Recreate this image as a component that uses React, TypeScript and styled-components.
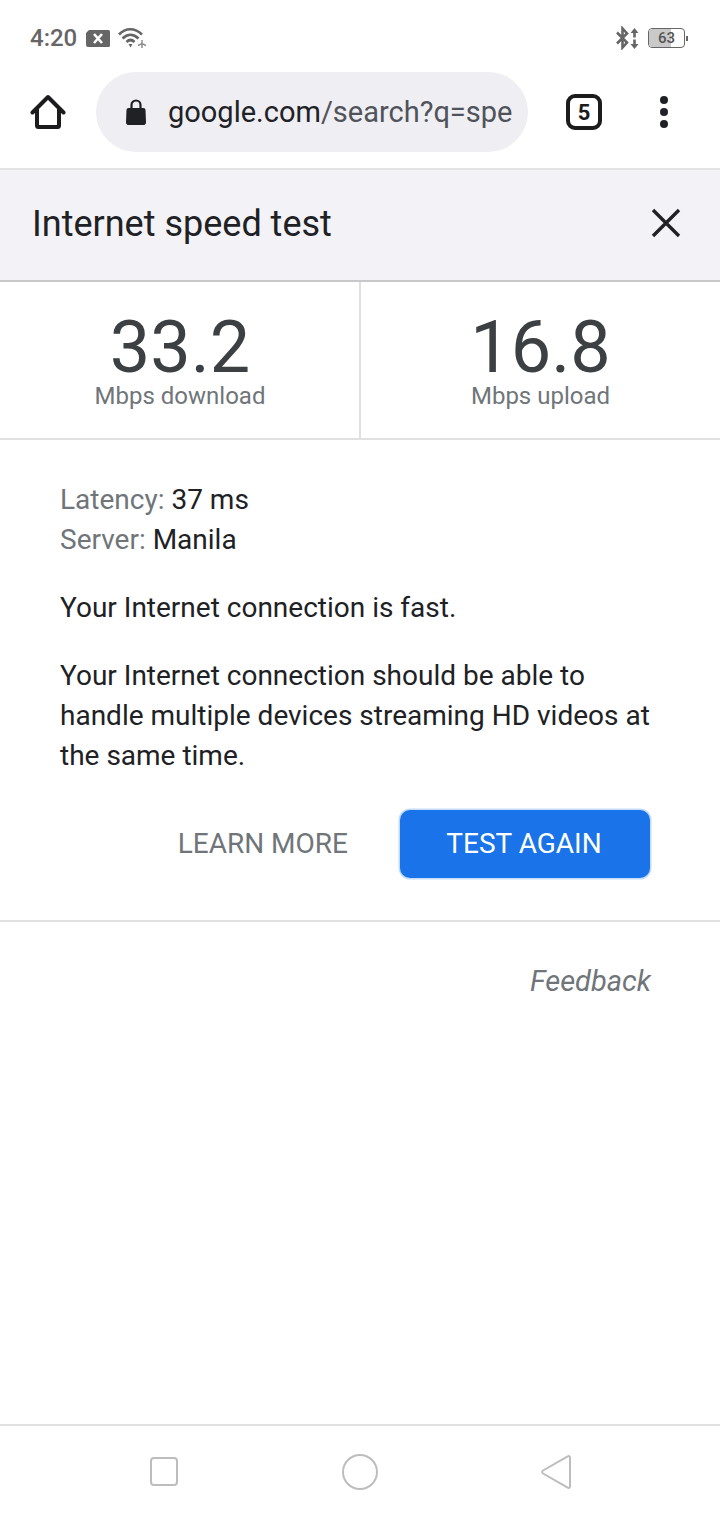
import { createGlobalStyle } from "styled-components";
import styled from "styled-components";

const GlobalStyle = createGlobalStyle`
  html, body {
    margin: 0;
    padding: 0;
    background: #fff;
  }
  * {
    box-sizing: border-box;
  }
  body {
    font-family: Roboto, "Liberation Sans", sans-serif;
    color: #202124;
  }
`;

export default function App() {
  return (
    <Page>
      <GlobalStyle />
      <StatusBar>
        <StatusGroup>
          <Clock>4:20</Clock>
          <NoticeIcon width="24" height="17" viewBox="0 0 24 17">
            <path d="M3 0h19.500a1.500 1.500 0 0 1 1.500 1.500v14a1.500 1.500 0 0 1-1.500 1.500H2a2 2 0 0 1-2-2V3z" fill="#666" />
            <path d="M8 4l8 9M16 4l-8 9" stroke="#fff" strokeWidth="2.600" />
          </NoticeIcon>
          <WifiIcon width="29" height="22" viewBox="0 0 29 22">
            <g fill="none" stroke="#666" strokeWidth="2.600">
              <path d="M1 7.500C7.500 0.500 17 0.500 24 7.500" />
              <path d="M4.500 11.500C9.500 6.500 15.500 6.500 20.500 11.500" />
              <path d="M8.500 15C11 12.500 14 12.500 16.500 15" />
            </g>
            <path d="M10.500 17h4l-2 3.500z" fill="#666" />
            <path d="M24 13v8M20 18.500l4-2 4 2" stroke="#8d8d8d" strokeWidth="1.500" fill="none" />
          </WifiIcon>
        </StatusGroup>
        <StatusGroup>
          <svg width="24" height="24" viewBox="0 0 24 24">
            <path d="M1 6.500l10 10-4.500 5V2.500l4.500 5-10 10" fill="none" stroke="#666" strokeWidth="2.600" />
            <path d="M18.500 2l4 5h-2.700v4.500h-2.600V7h-2.700zM18.500 23l4-5h-2.700v-4.500h-2.600V18h-2.700z" fill="#666" />
          </svg>
          <Battery>
            <BatteryLevel $percent={63} />
            <BatteryText>63</BatteryText>
          </Battery>
          <BatteryTip />
        </StatusGroup>
      </StatusBar>

      <Toolbar>
        <HomeButton>
          <svg width="36" height="36" viewBox="0 0 36 36">
            <path
              d="M2.500 18.500L18 3l15.500 15.500M7 15v16.500a1.500 1.500 0 0 0 1.500 1.500h19a1.500 1.500 0 0 0 1.500-1.500V15"
              fill="none"
              stroke="#1c1c1e"
              strokeWidth="4"
              strokeLinecap="round"
              strokeLinejoin="round"
            />
          </svg>
        </HomeButton>
        <Omnibox>
          <svg width="22" height="26" viewBox="0 0 22 26">
            <path d="M6.500 10V6a4.500 4.500 0 0 1 9 0v4" fill="none" stroke="#202124" strokeWidth="2.200" />
            <path d="M3.500 9h15a2 2 0 0 1 2 1.800l.5 12a3 3 0 0 1-3 3.200H4a3 3 0 0 1-3-3.200l.5-12a2 2 0 0 1 2-1.800z" fill="#202124" />
          </svg>
          <UrlText>
            google.com<UrlPath>/search?q=spe</UrlPath>
          </UrlText>
        </Omnibox>
        <TabCount>5</TabCount>
        <MenuDots>
          <Dot />
          <Dot />
          <Dot />
        </MenuDots>
      </Toolbar>

      <PanelHeader>
        <PanelTitle>Internet speed test</PanelTitle>
        <svg width="30" height="30" viewBox="0 0 30 30">
          <path d="M2 2l26 26M28 2L2 28" stroke="#202124" strokeWidth="3.400" />
        </svg>
      </PanelHeader>

      <Speeds>
        <SpeedCell>
          <SpeedValue>33.2</SpeedValue>
          <SpeedLabel>Mbps download</SpeedLabel>
        </SpeedCell>
        <SpeedCell $divided>
          <SpeedValue>16.8</SpeedValue>
          <SpeedLabel>Mbps upload</SpeedLabel>
        </SpeedCell>
      </Speeds>

      <Details>
        <InfoLine>
          <Muted>Latency:</Muted> 37 ms
        </InfoLine>
        <InfoLine>
          <Muted>Server:</Muted> Manila
        </InfoLine>
        <Paragraph>Your Internet connection is fast.</Paragraph>
        <Paragraph>
          Your Internet connection should be able to handle multiple devices streaming HD videos at the same time.
        </Paragraph>
        <Actions>
          <LearnMore>LEARN MORE</LearnMore>
          <TestAgain>TEST AGAIN</TestAgain>
        </Actions>
      </Details>

      <FeedbackRow>
        <Feedback>Feedback</Feedback>
      </FeedbackRow>

      <NavBar>
        <svg width="30" height="30" viewBox="0 0 30 30">
          <rect x="2" y="1" width="26" height="27" rx="3" fill="none" stroke="#bdbdbd" strokeWidth="2" />
        </svg>
        <svg width="38" height="38" viewBox="0 0 38 38">
          <circle cx="19" cy="19" r="17" fill="none" stroke="#bdbdbd" strokeWidth="2" />
        </svg>
        <svg width="32" height="36" viewBox="0 0 32 36">
          <path
            d="M29 3.500v29a1.500 1.500 0 0 1-2.300 1.200L2 19.500a1.800 1.800 0 0 1 0-3L26.700 2.300A1.500 1.500 0 0 1 29 3.500z"
            fill="none"
            stroke="#bdbdbd"
            strokeWidth="2"
          />
        </svg>
      </NavBar>
    </Page>
  );
}

const Page = styled.div`
  width: 720px;
  height: 1520px;
  background: #fff;
  display: flex;
  flex-direction: column;
  overflow: hidden;
`;

const StatusBar = styled.div`
  height: 73px;
  padding: 3px 32px 0 30px;
  display: flex;
  align-items: center;
  justify-content: space-between;
  flex-shrink: 0;
`;

const StatusGroup = styled.div`
  display: flex;
  align-items: center;
`;

const Clock = styled.span`
  font-size: 24px;
  font-weight: 500;
  color: #666;
`;

const NoticeIcon = styled.svg`
  margin-left: 9px;
`;

const WifiIcon = styled.svg`
  margin-left: 8px;
`;

const Battery = styled.div`
  position: relative;
  width: 37px;
  height: 20px;
  margin-left: 8px;
  border: 1.500px solid #666;
  border-radius: 4px;
  overflow: hidden;
`;

const BatteryLevel = styled.div<{ $percent: number }>`
  width: ${(props) => props.$percent}%;
  height: 100%;
  background: #c9c9c9;
`;

const BatteryText = styled.span`
  position: absolute;
  inset: 0;
  display: flex;
  align-items: center;
  justify-content: center;
  font-size: 15px;
  font-weight: 500;
  color: #555;
`;

const BatteryTip = styled.div`
  width: 2px;
  height: 5px;
  margin-left: 1px;
  background: #666;
`;

const Toolbar = styled.div`
  height: 97px;
  display: flex;
  align-items: center;
  flex-shrink: 0;
  border-bottom: 2px solid #e3e3e5;
  padding-bottom: 17px;
`;

const HomeButton = styled.div`
  width: 96px;
  display: flex;
  justify-content: center;
`;

const Omnibox = styled.div`
  width: 432px;
  height: 80px;
  border-radius: 40px;
  background: #eeeef3;
  display: flex;
  align-items: center;
  padding-left: 29px;
  gap: 21px;
`;

const UrlText = styled.span`
  font-size: 29px;
  color: #202124;
`;

const UrlPath = styled.span`
  color: #50535a;
`;

const TabCount = styled.div`
  width: 36px;
  height: 36px;
  margin-left: 38px;
  border: 4px solid #1c1c1e;
  border-radius: 9px;
  display: flex;
  align-items: center;
  justify-content: center;
  font-size: 22px;
  font-weight: 700;
  color: #1c1c1e;
`;

const MenuDots = styled.div`
  margin-left: 58px;
  display: flex;
  flex-direction: column;
  gap: 4px;
`;

const Dot = styled.span`
  width: 8px;
  height: 8px;
  border-radius: 50%;
  background: #202124;
`;

const PanelHeader = styled.div`
  height: 112px;
  background: #f3f3f7;
  border-bottom: 2px solid #c8c8ca;
  display: flex;
  align-items: center;
  justify-content: space-between;
  padding: 0 39px 4px 32px;
  flex-shrink: 0;
`;

const PanelTitle = styled.h1`
  margin: 0;
  padding-top: 2px;
  font-size: 36px;
  font-weight: 400;
  color: #202124;
`;

const Speeds = styled.div`
  display: grid;
  grid-template-columns: 1fr 1fr;
  height: 158px;
  border-bottom: 2px solid #e0e0e0;
  flex-shrink: 0;
`;

const SpeedCell = styled.div<{ $divided?: boolean }>`
  display: flex;
  flex-direction: column;
  align-items: center;
  padding-top: 30px;
  ${(props) => (props.$divided ? "border-left: 2px solid #e0e0e0; margin-left: -1px;" : "")}
`;

const SpeedValue = styled.div`
  font-size: 72px;
  line-height: 72px;
  color: #3c4043;
`;

const SpeedLabel = styled.div`
  font-size: 24px;
  line-height: 24px;
  color: #70757a;
`;

const Details = styled.div`
  padding: 40px 70px 42px 60px;
  border-bottom: 2px solid #e0e0e0;
  flex-shrink: 0;
`;

const InfoLine = styled.div`
  font-size: 28px;
  line-height: 40px;
  color: #202124;
`;

const Muted = styled.span`
  color: #70757a;
`;

const Paragraph = styled.p`
  margin: 28px 0 0;
  font-size: 28px;
  line-height: 40px;
  color: #202124;
`;

const Actions = styled.div`
  display: flex;
  justify-content: flex-end;
  align-items: center;
  margin-top: 34px;
  gap: 52px;
`;

const LearnMore = styled.span`
  padding-bottom: 2px;
  font-size: 28px;
  color: #70757a;
`;

const TestAgain = styled.button`
  width: 250px;
  height: 68px;
  padding: 0 2px 2px 0;
  border: 0;
  border-radius: 10px;
  background: #1a73e8;
  color: #fff;
  font-family: inherit;
  font-size: 28px;
  box-shadow: 0 0 0 1.500px #c4dcfa;
`;

const FeedbackRow = styled.div`
  flex: 1;
  padding: 40px 69px 0 0;
  display: flex;
  justify-content: flex-end;
  align-items: flex-start;
`;

const Feedback = styled.span`
  font-size: 29px;
  line-height: 38px;
  font-style: italic;
  color: #70757a;
`;

const NavBar = styled.div`
  height: 96px;
  border-top: 2px solid #e0e0e0;
  display: flex;
  align-items: center;
  justify-content: space-between;
  padding: 0 147px 2px 149px;
  flex-shrink: 0;
`;
